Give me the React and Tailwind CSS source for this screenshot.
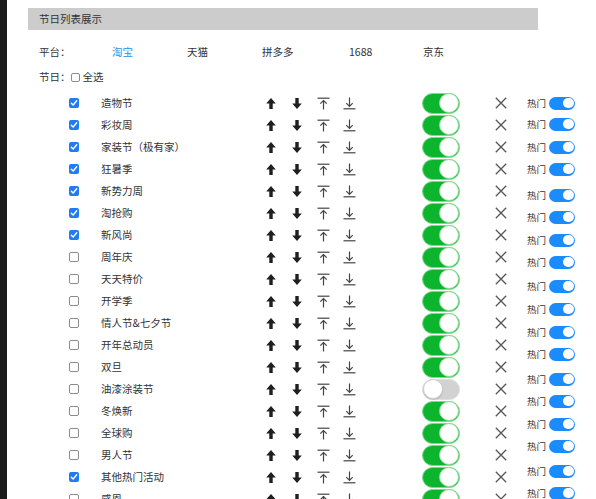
import React from "react";

const platforms = [
  { name: "淘宝", w: "w-[75px]" },
  { name: "天猫", w: "w-[75px]" },
  { name: "拼多多", w: "w-[87px]" },
  { name: "1688", w: "w-[74px]" },
  { name: "京东", w: "w-[40px]" },
];

const festivals = [
  { name: "造物节", checked: true, on: true },
  { name: "彩妆周", checked: true, on: true },
  { name: "家装节（极有家）", checked: true, on: true },
  { name: "狂暑季", checked: true, on: true },
  { name: "新势力周", checked: true, on: true },
  { name: "淘抢购", checked: true, on: true },
  { name: "新风尚", checked: true, on: true },
  { name: "周年庆", checked: false, on: true },
  { name: "天天特价", checked: false, on: true },
  { name: "开学季", checked: false, on: true },
  { name: "情人节&七夕节", checked: false, on: true },
  { name: "开年总动员", checked: false, on: true },
  { name: "双旦", checked: false, on: true },
  { name: "油漆涂装节", checked: false, on: false },
  { name: "冬焕新", checked: false, on: true },
  { name: "全球购", checked: false, on: true },
  { name: "男人节", checked: false, on: true },
  { name: "其他热门活动", checked: true, on: true },
  { name: "感恩", checked: false, on: true },
  { name: "年货节", checked: false, on: true },
];

// the hot column drifts a little against the rows
const hotOffsets = [
  "mt-0", "-mt-px", "mt-px", "mt-0", "mt-[4px]", "mt-0", "mt-px", "mt-0", "mt-[2px]",
  "mt-px", "mt-px", "mt-0", "mt-[3px]", "mt-0", "mt-px", "mt-0", "mt-[3px]", "mt-0", "mt-px",
];

function Check({ checked, size = "w-[10px] h-[10px]" }) {
  if (checked) {
    return (
      <span className={`${size} shrink-0 rounded-[2px] bg-[#1f7cf4] flex items-center justify-center`}>
        <svg width="8" height="8" viewBox="0 0 8 8">
          <path d="M1.3 4.2 L3.2 6 L6.7 1.8" fill="none" stroke="#fff" strokeWidth="1.4" strokeLinecap="round" strokeLinejoin="round" />
        </svg>
      </span>
    );
  }
  return <span className={`${size} shrink-0 rounded-[2px] border border-[#8c8c8c] bg-white`} />;
}

function UpSolid() {
  return (
    <svg width="12" height="13" viewBox="0 0 12 13">
      <path d="M6 1 L10.8 6.4 H7.7 V12 H4.3 V6.4 H1.2 Z" fill="#1f1f1f" />
    </svg>
  );
}

function DownSolid() {
  return (
    <svg width="12" height="13" viewBox="0 0 12 13">
      <path d="M6 12 L10.8 6.6 H7.7 V1 H4.3 V6.6 H1.2 Z" fill="#1f1f1f" />
    </svg>
  );
}

function ToTop() {
  return (
    <svg width="13" height="13" viewBox="0 0 13 13" fill="none" stroke="#444" strokeWidth="1.2">
      <path d="M0.5 1.2 H12.5" />
      <path d="M6.5 3.5 V12.5" />
      <path d="M3.3 6.7 L6.5 3.5 L9.7 6.7" />
    </svg>
  );
}

function ToBottom() {
  return (
    <svg width="13" height="13" viewBox="0 0 13 13" fill="none" stroke="#444" strokeWidth="1.2">
      <path d="M6.5 0.5 V9.3" />
      <path d="M3.3 6.1 L6.5 9.3 L9.7 6.1" />
      <path d="M0.5 11.8 H12.5" />
    </svg>
  );
}

function Cross() {
  return (
    <svg width="12" height="12" viewBox="0 0 12 12" fill="none" stroke="#555" strokeWidth="1.3">
      <path d="M0.8 0.8 L11.2 11.2 M11.2 0.8 L0.8 11.2" />
    </svg>
  );
}

function GreenSwitch({ on }) {
  if (!on) {
    return (
      <span className="w-[38px] h-[21px] rounded-full bg-[#d2d2d2] border border-[#dedede] flex items-center">
        <span className="w-[20px] h-[20px] rounded-full bg-white border border-[#cfcfcf] shadow-[0_1px_1px_rgba(0,0,0,0.15)]" />
      </span>
    );
  }
  return (
    <span className="w-[38px] h-[21px] rounded-full bg-[#0db52e] border border-[#7fd88c] flex items-center justify-end">
      <span className="w-[20px] h-[20px] rounded-full bg-white border border-[#8edb99]" />
    </span>
  );
}

function BlueSwitch() {
  return (
    <span className="ml-[3px] w-[26px] h-[13px] rounded-full bg-[#1a8cff] flex items-center justify-end pr-[1.5px]">
      <span className="w-[10.5px] h-[10.5px] rounded-full bg-white" />
    </span>
  );
}

export default function App() {
  return (
    <div className="flex h-[499px] w-[596px] overflow-hidden bg-white font-['Noto_Sans_CJK_SC',sans-serif] text-[10.5px] text-[#333]">
      <div className="w-[7px] shrink-0 bg-[#1b1b1b]" />

      <div className="flex-1 pl-[21px] pt-[8px]">
        <div className="h-[22px] w-[510px] bg-[#cccccc] pl-[11px] leading-[22px]">节日列表展示</div>

        <div className="mt-[12px] flex h-[20px] items-center pl-[11px]">
          <span className="w-[73px]">平台：</span>
          <div className="flex">
            {platforms.map((p, i) => (
              <span key={p.name} className={`${p.w} ${i === 0 ? "text-[#2b8fe0]" : ""}`}>
                {p.name}
              </span>
            ))}
          </div>
        </div>

        <div className="mt-[5px] flex h-[20px] items-center pl-[11px]">
          <span>节日：</span>
          <Check checked={false} size="w-[9px] h-[9px]" />
          <span className="ml-[3px]">全选</span>
        </div>

        <div className="mt-[5px] flex">
          <div className="w-[499px] shrink-0">
            {festivals.map((f) => (
              <div key={f.name} className="flex h-[22px] items-center pl-[41px]">
                <Check checked={f.checked} />
                <span className="ml-[22px] w-[157px] shrink-0">{f.name}</span>
                <span className="flex w-[26px] justify-center"><UpSolid /></span>
                <span className="flex w-[26px] justify-center"><DownSolid /></span>
                <span className="flex w-[26px] justify-center"><ToTop /></span>
                <span className="flex w-[26px] justify-center"><ToBottom /></span>
                <span className="ml-[60px]"><GreenSwitch on={f.on} /></span>
                <span className="ml-[35px] flex"><Cross /></span>
              </div>
            ))}
          </div>

          <div className="flex flex-col">
            {hotOffsets.map((m, i) => (
              <div key={i} className={`${m} flex h-[22px] items-center`}>
                <span className="text-[9.5px]">热门</span>
                <BlueSwitch />
              </div>
            ))}
          </div>
        </div>
      </div>
    </div>
  );
}
